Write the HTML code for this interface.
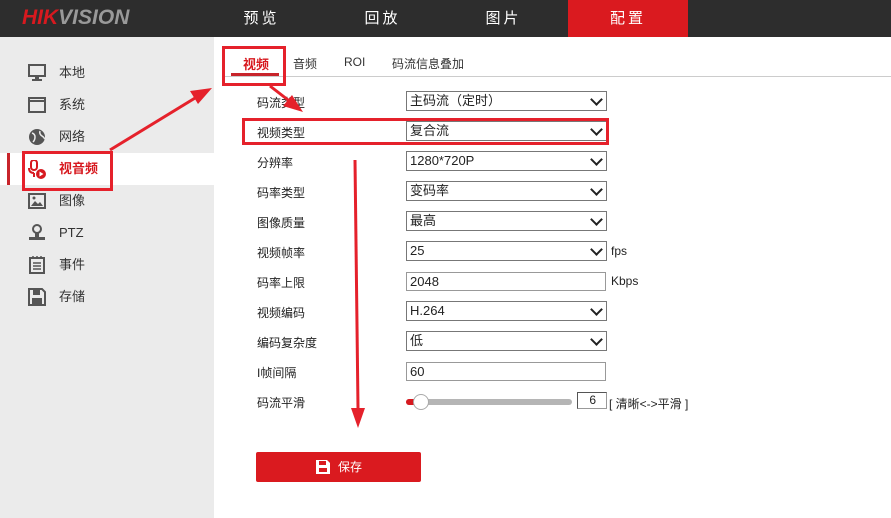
<!DOCTYPE html>
<html><head><meta charset="utf-8"><style>
*{margin:0;padding:0;box-sizing:border-box}
body{width:891px;height:518px;overflow:hidden;background:#fff;position:relative;font-family:"Liberation Sans","Noto Sans CJK SC",sans-serif;font-size:12px;color:#222}
.top{position:absolute;left:0;top:0;width:891px;height:37px;background:#2d2d2d}
.logo{position:absolute;left:22px;top:6px;font-size:21px;font-weight:bold;font-style:italic;letter-spacing:0px}
.nav{position:absolute;top:0;height:37px;width:121px;line-height:37px;text-align:center;color:#fff;font-size:15px;letter-spacing:3px}
.side{position:absolute;left:0;top:37px;width:214px;height:481px;background:#ebebeb}
.si{position:absolute;left:0;width:214px;height:32px;line-height:32px;font-size:13px;color:#333}
.si span{position:absolute;left:59px}
.si svg{position:absolute;left:28px;top:7px}
.abs{position:absolute}
.lbl{position:absolute;left:257px;font-size:12px;color:#222}
.sel{position:absolute;left:406px;width:201px;height:20px;border:1px solid #777;font-size:13px;line-height:18px;padding-left:3px;color:#222;background:#fff}
.sel:after{content:"";position:absolute;right:5px;top:3px;width:7px;height:7px;border-right:2px solid #222;border-bottom:2px solid #222;transform:rotate(45deg)}
.inp{position:absolute;left:406px;width:200px;height:19px;border:1px solid #999;font-size:13px;line-height:17px;padding-left:3px}
.red{position:absolute;border:3px solid #e5212b}
</style></head><body>
<div class="top">
<div class="logo"><span style="color:#d7191f">HIK</span><span style="color:#999">VISION</span></div>
<div class="nav" style="left:201px">预览</div>
<div class="nav" style="left:322px">回放</div>
<div class="nav" style="left:443px">图片</div>
<div class="nav" style="left:568px;width:120px;background:#da1a1f">配置</div>
</div>
<div class="side">
<div class="si" style="top:20px"><svg width="18" height="18"><rect x="1" y="1" width="16" height="11" fill="none" stroke="#555" stroke-width="2"/><rect x="7" y="12" width="4" height="3" fill="#555"/><rect x="4" y="15" width="10" height="2" fill="#555"/></svg><span>本地</span></div>
<div class="si" style="top:52px"><svg width="18" height="18"><rect x="1" y="2" width="16" height="14" fill="none" stroke="#555" stroke-width="2"/><rect x="1" y="4" width="16" height="2" fill="#555"/></svg><span>系统</span></div>
<div class="si" style="top:84px"><svg width="18" height="18"><circle cx="9" cy="9" r="8" fill="#555"/><path d="M4 5q3 1 3 4t-2 5M12 3q-1 3 2 5t2 3" stroke="#ebebeb" stroke-width="1.5" fill="none"/></svg><span>网络</span></div>
<div class="si" style="top:116px;background:#fff"><div class="abs" style="left:7px;top:0;width:3px;height:32px;background:#c8242b"></div><svg width="20" height="20" style="left:27px"><rect x="4" y="0" width="6" height="10" rx="3" fill="none" stroke="#d7191f" stroke-width="2"/><path d="M2 8q0 5 5 5M7 13v4" stroke="#d7191f" stroke-width="2" fill="none"/><circle cx="14" cy="14" r="5" fill="#d7191f"/><path d="M12.5 11.5v5l4-2.5z" fill="#fff"/></svg><span style="color:#d7191f;font-weight:bold">视音频</span></div>
<div class="si" style="top:148px"><svg width="18" height="18"><rect x="1" y="2" width="16" height="14" fill="none" stroke="#555" stroke-width="2"/><path d="M3 14l4-5 3 3 2-2 3 4z" fill="#555"/><circle cx="6" cy="6" r="1.5" fill="#555"/></svg><span>图像</span></div>
<div class="si" style="top:180px"><svg width="18" height="18"><circle cx="9" cy="5" r="4" fill="none" stroke="#555" stroke-width="2"/><rect x="7" y="9" width="4" height="4" fill="#555"/><rect x="1" y="13" width="16" height="3" fill="#555"/></svg><span>PTZ</span></div>
<div class="si" style="top:212px"><svg width="18" height="18"><rect x="2" y="2" width="14" height="15" fill="none" stroke="#555" stroke-width="2"/><path d="M5 7h8M5 10h8M5 13h8M5 0v3M9 0v3M13 0v3" stroke="#555" stroke-width="1.5"/></svg><span>事件</span></div>
<div class="si" style="top:244px"><svg width="18" height="18"><path d="M1 1h13l3 3v13H1z" fill="none" stroke="#555" stroke-width="2"/><rect x="5" y="2" width="7" height="5" fill="#555"/><rect x="4" y="10" width="10" height="6" fill="#555"/></svg><span>存储</span></div>
</div>

<div class="abs" style="left:222px;top:76px;width:669px;height:1px;background:#ccc"></div>
<div class="abs" style="left:243px;top:54px;font-size:13px;color:#d7191f;font-weight:bold">视频</div>
<div class="abs" style="left:231px;top:73px;width:48px;height:3px;background:#c8242b"></div>
<div class="abs" style="left:293px;top:55px;font-size:12px;color:#333">音频</div>
<div class="abs" style="left:344px;top:55px;font-size:12px;color:#333">ROI</div>
<div class="abs" style="left:392px;top:55px;font-size:12px;color:#333">码流信息叠加</div>

<div class="lbl" style="top:94px">码流类型</div><div class="sel" style="top:91px">主码流（定时）</div>
<div class="lbl" style="top:124px">视频类型</div><div class="sel" style="top:121px">复合流</div>
<div class="lbl" style="top:154px">分辨率</div><div class="sel" style="top:151px">1280*720P</div>
<div class="lbl" style="top:184px">码率类型</div><div class="sel" style="top:181px">变码率</div>
<div class="lbl" style="top:214px">图像质量</div><div class="sel" style="top:211px">最高</div>
<div class="lbl" style="top:244px">视频帧率</div><div class="sel" style="top:241px">25</div><div class="abs" style="left:611px;top:244px">fps</div>
<div class="lbl" style="top:274px">码率上限</div><div class="inp" style="top:272px">2048</div><div class="abs" style="left:611px;top:274px">Kbps</div>
<div class="lbl" style="top:304px">视频编码</div><div class="sel" style="top:301px">H.264</div>
<div class="lbl" style="top:334px">编码复杂度</div><div class="sel" style="top:331px">低</div>
<div class="lbl" style="top:364px">I帧间隔</div><div class="inp" style="top:362px">60</div>
<div class="lbl" style="top:394px">码流平滑</div>
<div class="abs" style="left:406px;top:399px;width:166px;height:6px;border-radius:3px;background:#b5b5b5"></div>
<div class="abs" style="left:406px;top:399px;width:12px;height:6px;border-radius:3px;background:#d7191f"></div>
<div class="abs" style="left:413px;top:394px;width:16px;height:16px;border-radius:50%;background:#fff;border:1px solid #aaa"></div>
<div class="abs" style="left:577px;top:392px;width:30px;height:17px;border:1px solid #999;border-top-color:#555;border-left-color:#555;text-align:right;padding-right:10px;font-size:12px;line-height:15px">6</div>
<div class="abs" style="left:609px;top:395px;font-size:12px">[ 清晰&lt;-&gt;平滑 ]</div>

<div class="abs" style="left:256px;top:452px;width:165px;height:30px;background:#da1a1f;border-radius:2px;color:#fff;font-size:12px;line-height:30px"><svg width="14" height="14" style="position:absolute;left:60px;top:8px"><path d="M0 0h11l3 3v11H0z" fill="#fff"/><rect x="3" y="1" width="7" height="4" fill="#da1a1f"/><rect x="3" y="8" width="8" height="4" fill="#da1a1f"/></svg><span style="position:absolute;left:82px">保存</span></div>

<div class="red" style="left:22px;top:151px;width:91px;height:40px"></div>
<div class="red" style="left:222px;top:46px;width:64px;height:40px"></div>
<div class="red" style="left:242px;top:118px;width:367px;height:27px"></div>
<svg class="abs" style="left:0;top:0" width="891" height="518">
<g stroke="#e5212b" stroke-width="3" fill="#e5212b">
<line x1="110" y1="150" x2="200" y2="95"/>
<path d="M212 88l-22 3 8 13z" stroke="none"/>
<line x1="270" y1="86" x2="292" y2="103"/>
<path d="M303 112l-20-6 9-11z" stroke="none"/>
<line x1="355" y1="160" x2="358" y2="408"/>
<path d="M358 428l-7-20h14z" stroke="none"/>
</g>
</svg>
</body></html>
